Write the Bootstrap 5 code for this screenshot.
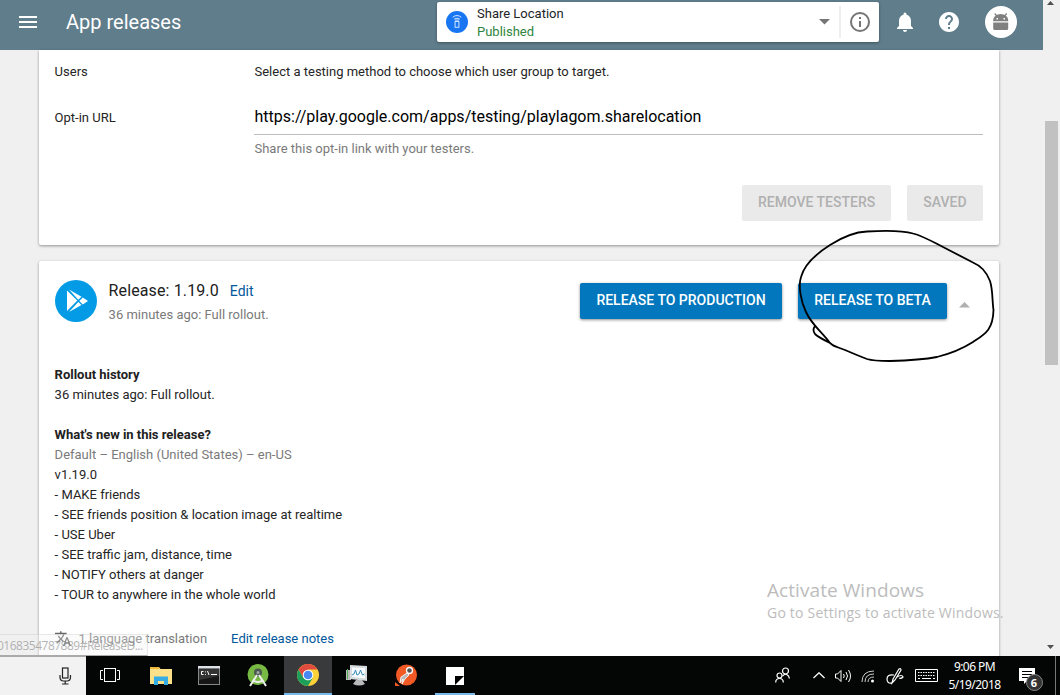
<!DOCTYPE html>
<html lang="en">
<head>
<meta charset="utf-8">
<title>App releases</title>
<meta name="viewport" content="width=device-width, initial-scale=1">
<link href="https://cdn.jsdelivr.net/npm/bootstrap@5.3.0/dist/css/bootstrap.min.css" rel="stylesheet">
<style>
body{font-family:Roboto,sans-serif;font-size:13px;line-height:20px;color:#252525;background:#f0f0f0;height:695px}
svg{display:block;flex:none}
.screen{height:656px}
.page{width:1043px}
.topbar{height:50px;background:#607d8b;padding-left:19px;flex:none}
.topbar h1{font-size:20px;line-height:24px;font-weight:400;margin:0 0 6px 29px;width:342px}
.app-pick{width:442px;height:40px;margin:2px 0 8px 0;border-radius:2px;background:#fff;box-shadow:0 1px 3px rgba(0,0,0,.35);padding-left:9px}
.app-pick .who{line-height:18px;margin:1px 0 0 8px;width:342px}
.published{color:#2e8540}
.rule{width:2px;height:32px;background:#efefef}
.panel{width:960px;margin-left:39px;background:#fff;border-radius:0 0 2px 2px;box-shadow:0 1px 3px rgba(0,0,0,.4);flex:none}
.testers{height:195px;padding:12px 16px 24px 15.6px;margin-bottom:16px}
.label-col{width:199.9px;flex:none}
.opt-url{font-size:16px;line-height:24px;color:#000;border-bottom:1px solid #bdbdbd;padding:10px 0 5px;height:40px}
.soft{color:#7a7a7a}
.btn-flat{height:36px;border:0;border-radius:2px;padding:0 16px 1px;font-size:14px;line-height:35px;font-weight:500;color:#b0b0b0;background:#eaeaea;white-space:nowrap;flex:none}
.btn-blue{color:#fff;background:#0277bd;box-shadow:0 1px 3px rgba(0,0,0,.45)}
.release{height:410px;padding:0 16px 0 15.6px;border-radius:2px}
.head{height:80px;padding-top:19px}
.rel-title{font-size:16px;line-height:22px;color:#212121;letter-spacing:.12px}
.linkish{color:#01579b}
.history{margin-top:24px}
.history b{font-weight:700;color:#212121;letter-spacing:-.02px}
.scroller{width:17px;background:#f0f0f0}
.thumb{width:13px;height:244px;background:#c1c1c1;margin-top:116px}
.url-hint{position:absolute;left:0;top:634px;width:148px;height:22px;background:rgba(242,242,242,.3);border:1px solid rgba(190,190,190,.3);border-left:0;border-bottom-color:#aaa;color:rgba(110,110,110,.5);line-height:22px;font-family:"Open Sans","Noto Sans",sans-serif;font-size:12px;letter-spacing:-.5px}
.url-hint span{display:block;margin-left:-3px;white-space:nowrap}
.activate{position:absolute;left:767px;top:578px;font-family:"Open Sans","Noto Sans",sans-serif;color:#bcbcbc;white-space:nowrap}
.activate .big{font-size:19px;line-height:25px;letter-spacing:.07px}
.activate .sub{font-size:14px;line-height:20px;letter-spacing:.21px}
.ink{position:absolute;left:790px;top:220px}
.taskbar{height:39px;background:#040505;color:#fff}
.search{width:86px;background:#f2f2f2;border-top:1px solid #aaa;padding-left:58px}
.slot{width:49.2px;padding-left:1.2px}
.slot>div{height:39px;border-bottom:2px solid transparent;padding:1px 1px 0 0}
.slot .on{background:#383a3b;border-color:#76b9ed;padding-right:0}
.slot .open{border-color:#76b9ed;margin:0 5px 0 3px;padding:2px 0 0}
.clock{font-family:"Noto Sans",sans-serif;font-size:12px;line-height:18px;width:60px;margin-left:7px;letter-spacing:-.55px;white-space:nowrap}
.tray{padding-left:295px;height:39px}
.count{position:absolute;left:7px;top:6px;width:17px;height:17px;border-radius:50%;background:#333;border:1px solid #888;font:bold 11px/15px "Noto Sans",sans-serif;text-align:center}
</style>
</head>
<body class="overflow-hidden position-relative">
<div class="screen d-flex overflow-hidden">
  <main class="page d-flex flex-column">
    <header class="topbar d-flex align-items-center text-white">
      <svg width="18" height="12" style="margin-bottom:6px"><path d="M0 1h18M0 6h18M0 11h18" stroke="#fff" stroke-width="2"/></svg>
      <h1>App releases</h1>
      <div style="width:29px"></div>
      <div class="app-pick d-flex align-items-center text-dark">
        <svg width="22" height="22" style="margin-right:1px" viewBox="0 0 23 23"><circle cx="11.5" cy="11.5" r="11.500" fill="#1976f3"/><g fill="none" stroke="#d7e8ff" stroke-width="1"><rect x="9.5" y="11" width="4" height="6"/><path d="M9.500 9.500h4M7 6.500q4.500-3.500 9 0M8.500 8.500q3-2 6 0"/></g></svg>
        <div class="who"><div>Share Location</div><div class="published">Published</div></div>
        <svg width="11" height="6"><path d="M0 0h11L5.500 5.500z" fill="#757575"/></svg>
        <div class="rule" style="margin-left:9px"></div>
        <svg width="20" height="20" style="margin-left:9px"><circle cx="10" cy="10" r="9" fill="none" stroke="#757575" stroke-width="2"/><path d="M9 5h2v2H9zM9 9h2v6H9z" fill="#757575"/></svg>
      </div>
      <svg width="16" height="20" style="margin:0 26px 6px 18px" viewBox="0 0 16 20"><path d="M8 20c1.100 0 2-.9 2-2H6c0 1.100.9 2 2 2zM14 14V9c0-3.100-1.600-5.600-4.500-6.300V2a1.500 1.500 0 0 0-3 0v.7C3.600 3.400 2 5.900 2 9v5l-2 2v1h16v-1z" fill="#fff"/></svg>
      <svg width="20" height="20" style="margin-bottom:6px" viewBox="2 2 20 20"><path d="M12 2C6.480 2 2 6.480 2 12s4.480 10 10 10 10-4.480 10-10S17.520 2 12 2zm1 17h-2v-2h2v2zm2.070-7.750l-.9.92C13.450 12.900 13 13.500 13 15h-2v-.5c0-1.100.45-2.100 1.170-2.830l1.240-1.260c.37-.36.59-.86.59-1.410 0-1.100-.9-2-2-2s-2 .9-2 2H8c0-2.210 1.790-4 4-4s4 1.790 4 4c0 .88-.36 1.680-.93 2.250z" fill="#fff"/></svg>
      <svg width="32" height="32" style="margin:0 0 6px 26px" viewBox="0 0 32 32"><circle cx="16" cy="16" r="16" fill="#fff"/><path d="M8.200 15.200v-1.200a7.500 6 0 0 1 15 0v1.200zM8.200 16.500h15v6q0 1.500-1.500 1.500h-12q-1.500 0-1.500-1.500z" fill="#808080"/><path d="M9.700 7.500l2.500 3M21.700 7.500l-2.500 3" stroke="#808080" stroke-width="1.200"/><path d="M11.500 12H13v1.500h-1.500zM18.500 12H20v1.500h-1.500z" fill="#fff"/></svg>
    </header>

    <section class="panel testers d-flex flex-column">
      <div class="d-flex"><div class="label-col">Users</div><div>Select a testing method to choose which user group to target.</div></div>
      <div class="d-flex" style="margin-top:13px">
        <div class="label-col" style="padding-top:13px">Opt-in URL</div>
        <div class="flex-fill"><div class="opt-url">https://play.google.com/apps/testing/playlagom.sharelocation</div><div class="soft" style="padding-top:4px">Share this opt-in link with your testers.</div></div>
      </div>
      <div class="d-flex justify-content-end gap-3 mt-auto">
        <button class="btn btn-flat" style="width:149px">REMOVE TESTERS</button><button class="btn btn-flat" style="width:76px">SAVED</button>
      </div>
    </section>

    <section class="panel release">
      <div class="head d-flex align-items-start">
        <svg width="42" height="42" viewBox="0 0 42 42"><circle cx="21" cy="21" r="21" fill="#039be5"/><path d="M12 10.500L22.300 20.500 12 31zM14 9.500l12.500 7.300-3.200 3zM14 32l9.300-10 3.200 2.900zM24.300 21l3.500-3.500L33 21l-5.200 3.400z" fill="#fff"/></svg>
        <div style="margin-left:12px;width:471.4px">
          <div class="d-flex align-items-center"><span class="rel-title">Release: 1.19.0</span><span class="linkish" style="font-size:14px;margin-left:11px">Edit</span></div>
          <div class="soft" style="margin-top:3px">36 minutes ago: Full rollout.</div>
        </div>
        <button class="btn btn-flat btn-blue" style="margin-top:3px;width:202px">RELEASE TO PRODUCTION</button>
        <button class="btn btn-flat btn-blue" style="margin:3px 12px 0 16px;width:149px">RELEASE TO BETA</button>
        <svg width="11" height="6" style="margin-top:22px"><path d="M0 5.500h11L5.500 0z" fill="#b0b0b0"/></svg>
      </div>
      <div class="history">
        <div><b>Rollout history</b></div>
        <div>36 minutes ago: Full rollout.</div>
        <div style="margin-top:20px"><b>What's new in this release?</b></div>
        <div class="soft">Default – English (United States) – en-US</div>
        <div>v1.19.0</div>
        <div>- MAKE friends</div>
        <div>- SEE friends position &amp; location image at realtime</div>
        <div>- USE Uber</div>
        <div>- SEE traffic jam, distance, time</div>
        <div>- NOTIFY others at danger</div>
        <div>- TOUR to anywhere in the whole world</div>
      </div>
      <div class="d-flex align-items-center soft" style="margin-top:24px">
        <svg width="16" height="16" viewBox="1 2 22 21"><path d="M12.870 15.070l-2.540-2.510.03-.03c1.740-1.940 2.980-4.170 3.710-6.530H17V4h-7V2H8v2H1v1.990h11.170C11.500 7.920 10.440 9.750 9 11.350 8.070 10.320 7.300 9.190 6.690 8h-2c.73 1.630 1.730 3.170 2.980 4.560l-5.090 5.020L4 19l5-5 3.110 3.110.76-2.040zM18.500 10h-2L12 22h2l1.120-3h4.750L21 22h2l-4.500-12zm-2.620 7l1.620-4.330L19.120 17h-3.240z" fill="#666"/></svg>
        <span style="margin-left:8px">1 language translation</span><span class="linkish" style="margin-left:24px">Edit release notes</span>
      </div>
    </section>
  </main>
  <aside class="scroller d-flex flex-column align-items-center">
    <svg width="7" height="4" style="margin:1px 3px 0 0"><path d="M0 4h7L3.500 0z" fill="#505050"/></svg>
    <div class="thumb"></div>
    <svg width="7" height="4" class="mt-auto" style="margin:0 3px 7px 0"><path d="M0 0h7L3.500 4z" fill="#505050"/></svg>
  </aside>
</div>

<footer class="taskbar d-flex align-items-center">
  <div class="search h-100 d-flex align-items-center"><svg width="14" height="18" viewBox="0 0 14 18" fill="none" stroke="#222" stroke-width="1.200"><rect x="4.500" y="1" width="5.500" height="10" /><path d="M2 8v2q0 4 3.500 4h3.500q3.500 0 3.500-4V8M7.200 14v3M4 17h6.500"/></svg></div>
  <div class="slot"><div class="d-flex align-items-center justify-content-center"><svg width="20" height="15" style="margin-right:1px" fill="none" stroke="#fff"><rect x="4.500" y=".5" width="11" height="13"/><path d="M3 2.500H.5v9H3M17 2.500h2.500v9H17"/></svg></div></div>
  <div class="slot"><div class="d-flex align-items-center justify-content-center"><svg width="22" height="19" style="margin-left:2px"><path d="M0 1h9l1.500 2H22v15H0z" fill="#fbe08a"/><path d="M0 1h9v2H0z" fill="#efb838"/><path d="M4 10.500h14V19h-4v-4H8v4H4z" fill="#35ace3"/></svg></div></div>
  <div class="slot"><div class="d-flex align-items-center justify-content-center"><svg width="22" height="19"><rect x=".5" y=".5" width="21" height="18" fill="#161616" stroke="#85898c"/><path d="M0 0h22v2.500H0z" fill="#dce3e8"/><path d="M1 3h20v7L1 14z" fill="#333"/><path d="M5.500 5.500H3.500v3h2M7.500 5.500v.8M7.500 8v.8M9.500 5l1.500 4M13 8.500h6" stroke="#fff" fill="none"/></svg></div></div>
  <div class="slot"><div class="d-flex align-items-center justify-content-center"><svg width="22" height="24" viewBox="0 0 22 24"><circle cx="11" cy="11.500" r="10.500" fill="#78b943"/><circle cx="11" cy="9.500" r="4" fill="#4c5750"/><circle cx="11" cy="9.500" r="1.500" fill="#9aa"/><path d="M10 12L3 23M12 12l7 11M5.500 17q5.500 4 11 0" stroke="#eee" stroke-width="2" fill="none"/></svg></div></div>
  <div class="slot"><div class="on d-flex align-items-center justify-content-center"><svg width="22" height="22" viewBox="0 0 22 22"><circle cx="11" cy="11" r="11" fill="#fdd13a"/><path d="M1.500 5.500A11 11 0 0 1 20.500 5.500H11L6.200 13.700z" fill="#df4b3e"/><path d="M1.500 5.500L6.200 13.700 11 16.500 15.800 13.700 11 22A11 11 0 0 1 1.500 5.500z" fill="#1b9f5b"/><circle cx="11" cy="11" r="5.300" fill="#fff"/><circle cx="11" cy="11" r="4.300" fill="#4788f2"/></svg></div></div>
  <div class="slot"><div class="d-flex align-items-center justify-content-center"><svg width="24" height="22"><path d="M1 6h5v10H1z" fill="#bbb"/><path d="M2 5h1v10H2z" fill="#4caf50"/><path d="M5 1l17 1v15L5 15z" fill="#d5dadd"/><path d="M7 3.500l13 .5v10.500L7 13z" fill="#f6fbff"/><path d="M7 11l2-1 1.500-4L12 11l2-1 1.500-4 2 5 2-1" fill="none" stroke="#348bb9"/><path d="M11 16h6l3 4q-6 3-12 0z" fill="#b8babb"/></svg></div></div>
  <div class="slot"><div class="d-flex align-items-center justify-content-center"><svg width="24" height="24" style="margin-top:2px"><path d="M1 18l5 4H1z" fill="#f15a24"/><circle cx="12.500" cy="11" r="10.500" fill="#f15a24"/><circle cx="15.500" cy="6.500" r="3" fill="#555" stroke="#fff" stroke-width="1.300"/><path d="M13 9L7 13l-1 6 3-4-1 5 3-5 4-4z" fill="#bbb" stroke="#fff" stroke-width=".8"/></svg></div></div>
  <div class="slot"><div class="open d-flex align-items-center justify-content-center"><svg width="18" height="18"><path d="M0 0h18v18H0z" fill="#fff"/><path d="M9 9h9l-9 9z" fill="#000"/></svg></div></div>
  <div class="tray d-flex align-items-center">
    <svg width="16" height="17" fill="none" stroke="#fff" stroke-width="1.200"><circle cx="10.500" cy="4" r="3"/><path d="M7.500 9q3-3.500 6 0l1 2.500"/><circle cx="4.500" cy="8.500" r="2.500"/><path d="M.7 15.500q0-4 3.800-4t3.800 4"/></svg>
    <svg width="12" height="7" style="margin-left:22px" fill="none" stroke="#fff" stroke-width="1.300"><path d="M.5 6L6 .8 11.500 6"/></svg>
    <svg width="17" height="14" style="margin-left:10px" fill="none" stroke="#fff"><path d="M.5 5h2L6 1.500v11L2.500 9h-2zM8.500 5q1.500 2 0 4M11 3q3 4 0 8M13.500 1q4 6 0 12"/></svg>
    <svg width="14" height="14" style="margin-left:9px" fill="none" stroke="#ccc"><path d="M1 13Q1 2 13 2M4 13q0-8 9-8M7 13q0-5 6-5"/><circle cx="11.500" cy="12" r="1.500" fill="#fff" stroke="none"/></svg>
    <svg width="18" height="18" style="margin-left:11px" fill="none" stroke="#fff" stroke-width="1.200"><path d="M7 12l6-10q2-1 2 1L9 13l-3 3zM8 8q-7-1-7 4 0 5 5 4M11 10q5-3 6 0-2 2-4 1"/></svg>
    <svg width="23" height="13" style="margin-left:11px" fill="none" stroke="#fff"><path d="M.5.500h22v12H.5z"/><path d="M3 3.500h17M3 6.500h17" stroke-dasharray="1.500 1"/><path d="M3 9.500h2M7 9.500h9M18 9.500h2"/></svg>
    <div class="clock text-center"><div>9:06 PM</div><div>5/19/2018</div></div>
    <div class="position-relative" style="margin-left:14px"><svg width="16" height="16"><path d="M0 0h16v13H8l-3 3v-3H0z" fill="#fff"/><path d="M3 3.500h10M3 6.500h10M3 9.500h6" stroke="#000"/></svg><span class="count">6</span></div>
  </div>
  <div class="ms-auto h-100" style="width:5px;border-left:1px solid #777"></div>
</footer>

<div class="url-hint"><span>0168354787889#ReleaseD...</span></div>
<div class="activate"><div class="big">Activate Windows</div><div class="sub">Go to Settings to activate Windows.</div></div>
<svg class="ink" width="210" height="150" viewBox="790 220 210 150" fill="none" stroke="#000" stroke-width="1.800" stroke-linejoin="round"><path d="M830 343C820 330 812 325 806 312C801 302 798 286 801 277C805 262 819 252 830 245C844 236 855 232 867 231.500C884 230.500 901 230 913 233.500C923 236 933 242 943 247L972 262C981 266 986 271 990 281C993 290 992 300 993.500 310C993 330 985 334 973 342C962 349 949 354 937 357C921 360 906 360.500 890 361C880 361 873 361 867 359C859 356 852 353 845 350C838 347 834 347 830 343C824 340 818 337 815 334Q812 330 815 326"/></svg>
<script src="https://cdn.jsdelivr.net/npm/bootstrap@5.3.0/dist/js/bootstrap.bundle.min.js"></script>
</body>
</html>
